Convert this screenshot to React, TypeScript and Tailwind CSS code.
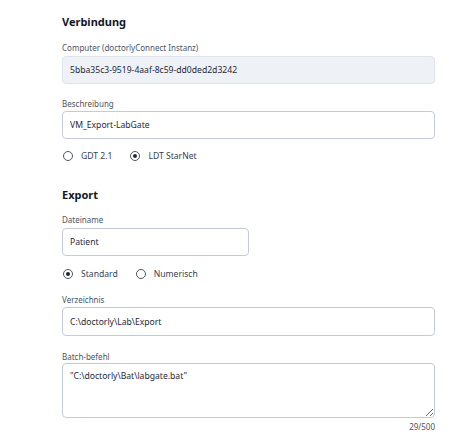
import React from 'react';

function Label({ children, className = '' }: { children: React.ReactNode; className?: string }) {
  return <div className={`text-[8px] leading-[10px] text-[#4b5563] ${className}`}>{children}</div>;
}

function Radio({ checked, label }: { checked?: boolean; label: string }) {
  return (
    <label className="flex items-center gap-[8px] text-[8.6px] leading-[12px] text-[#374151]">
      <span className="w-[10px] h-[10px] rounded-full border border-[#4b5563] flex items-center justify-center">
        {checked && <span className="w-[4px] h-[4px] rounded-full bg-[#1f2937]" />}
      </span>
      {label}
    </label>
  );
}

const inputCls =
  'w-full h-[28px] px-[7px] rounded-[4px] border border-[#c5cbd6] bg-white text-[8.6px] text-[#1f2937] outline-none';

export default function App() {
  return (
    <div
      className="w-[468px] h-[440px] bg-white overflow-hidden"
      style={{ fontFamily: '"Noto Sans", "Open Sans", sans-serif' }}
    >
      <div className="ml-[62px] w-[373px] pt-[15px]">
        <h2 className="text-[11px] leading-[14px] font-bold text-[#111827]">Verbindung</h2>

        <Label className="mt-[14px]">Computer (doctorlyConnect Instanz)</Label>
        <div className="mt-[3px] h-[28px] px-[7px] flex items-center rounded-[4px] border border-[#dfe3ea] bg-[#eef1f6] text-[8.6px] text-[#1f2937]">
          5bba35c3-9519-4aaf-8c59-dd0ded2d3242
        </div>

        <Label className="mt-[15px]">Beschreibung</Label>
        <input className={`${inputCls} mt-[2px] block`} defaultValue="VM_Export-LabGate" />

        <div className="mt-[11px] flex items-center gap-[18px] pl-[1px]">
          <Radio label="GDT 2.1" />
          <Radio checked label="LDT StarNet" />
        </div>

        <h2 className="mt-[26px] text-[11px] leading-[14px] font-bold text-[#111827]">Export</h2>

        <Label className="mt-[13px]">Dateiname</Label>
        <input className={`${inputCls} mt-[3px] block !w-[187px]`} defaultValue="Patient" />

        <div className="mt-[12px] flex items-center gap-[18px] pl-[1px]">
          <Radio checked label="Standard" />
          <Radio label="Numerisch" />
        </div>

        <Label className="mt-[15px]">Verzeichnis</Label>
        <input className={`${inputCls} mt-[2px] block !h-[29px]`} defaultValue="C:\doctorly\Lab\Export" />

        <Label className="mt-[16px]">Batch-befehl</Label>
        <textarea
          className="mt-[1px] block w-full h-[55px] px-[7px] py-[6px] rounded-[4px] border border-[#c5cbd6] bg-white text-[8.6px] leading-[12px] text-[#1f2937] outline-none resize-y"
          defaultValue={'"C:\\doctorly\\Bat\\labgate.bat"'}
        />
        <div className="mt-[4px] text-right text-[8px] leading-[10px] text-[#4b5563]">29/500</div>
      </div>
    </div>
  );
}
